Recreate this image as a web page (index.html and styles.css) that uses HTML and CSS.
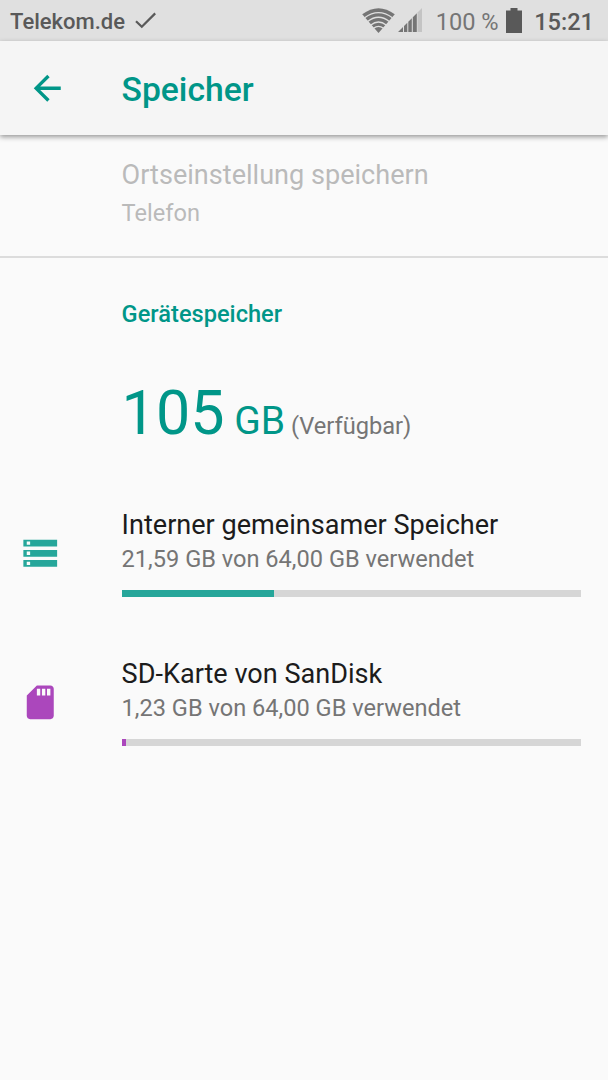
FILE: index.html
```html
<!DOCTYPE html>
<html lang="de">
<head>
    <meta charset="UTF-8">
    <meta name="viewport" content="width=device-width, initial-scale=1.0">
    <title>Speicher</title>
    <link rel="stylesheet" href="styles.css">
</head>
<body>
    <!-- Status bar -->
    <div class="status-bar">
        <span class="carrier">Telekom.de</span>
        <svg class="check-icon" width="22" height="17" viewBox="0 0 22 17">
            <path d="M1 9.2l5.8 5.6L20.2 1.4" fill="none" stroke="#595959" stroke-width="2.2"/>
        </svg>
        <div class="status-right">
            <svg class="wifi-icon" width="33" height="25" viewBox="0 0 33 25">
                <path d="M.2 6.3Q16.5-5.8 32.8 6.3L16.5 25z" fill="#757575"/>
                <g fill="none" stroke="#e0e0e0" stroke-width="1.3">
                    <path d="M2.6 9.8Q16.5-.6 30.4 9.8"/>
                    <path d="M5.7 13.5Q16.5 5 27.3 13.5"/>
                    <path d="M8.8 17Q16.5 11 24.2 17"/>
                    <path d="M11.5 20.2Q16.5 16.4 21.5 20.2"/>
                </g>
            </svg>
            <svg class="signal-icon" width="24" height="24" viewBox="0 0 24 24">
                <path d="M0 24L5 19V24z M6 24V18l3.3-3.3V24z M10.3 24V13.7l3.5-3.5V24z M14.8 24V9.2l4-4V24z" fill="#757575"/>
                <path d="M19.5 24V4.5L24 0V24z" fill="#c4c4c4"/>
            </svg>
            <span class="battery-level">100 %</span>
            <svg class="battery-icon" width="16" height="25" viewBox="0 0 16 25">
                <path d="M0 2.5h4.5V0h7v2.5H16V25H0z" fill="#595959"/>
            </svg>
            <span class="clock">15:21</span>
        </div>
    </div>

    <header class="app-bar">
        <svg class="back-icon" width="40.5" height="40.5" viewBox="0 0 24 24">
            <path d="M20 11H7.83l5.59-5.59L12 4l-8 8 8 8 1.41-1.41L7.83 13H20v-2z" fill="#009688"/>
        </svg>
        <h1>Speicher</h1>
    </header>

    <main>
        <section class="location">
            <p class="item-title">Ortseinstellung speichern</p>
            <p class="item-summary">Telefon</p>
        </section>

        <section class="device">
            <h2>Gerätespeicher</h2>
            <p class="available"><span class="amount">105</span><span class="unit"> GB</span> <span class="note">(Verfügbar)</span></p>

            <div class="volume internal">
                <svg class="volume-icon" width="40.5" height="40.5" viewBox="0 0 24 24">
                    <path d="M2 20h20v-4H2v4zm2-3h2v2H4v-2zM2 4v4h20V4H2zm4 3H4V5h2v2zm-4 7h20v-4H2v4zm2-3h2v2H4v-2z" fill="#26a69a"/>
                </svg>
                <div class="volume-info">
                    <p class="item-title">Interner gemeinsamer Speicher</p>
                    <p class="item-summary">21,59 GB von 64,00 GB verwendet</p>
                    <div class="bar"><div class="bar-fill" style="width: 33.1%"></div></div>
                </div>
            </div>

            <div class="volume sd-card">
                <svg class="volume-icon" width="40.5" height="40.5" viewBox="0 0 24 24">
                    <path d="M18 2h-8L4.02 8 4 20c0 1.1.9 2 2 2h12c1.1 0 2-.9 2-2V4c0-1.1-.9-2-2-2zm-6 6h-2V4h2v4zm3 0h-2V4h2v4zm3 0h-2V4h2v4z" fill="#ab47bc"/>
                </svg>
                <div class="volume-info">
                    <p class="item-title">SD-Karte von SanDisk</p>
                    <p class="item-summary">1,23 GB von 64,00 GB verwendet</p>
                    <div class="bar"><div class="bar-fill" style="width: 1%"></div></div>
                </div>
            </div>
        </section>
    </main>
</body>
</html>
```
FILE: styles.css
```css
:root {
    --primary-color: #009688;
    --internal-color: #26a69a;
    --sd-color: #ab47bc;
    --text-color: #1c1c1c;
    --muted-color: #757575;
    --disabled-color: #bababa;
    --background-color: #fafafa;
}

*, *::before, *::after {
    box-sizing: border-box;
    margin: 0;
    padding: 0;
}

body {
    font-family: Roboto, sans-serif;
    color: var(--text-color);
    background-color: var(--background-color);
    min-height: 100vh;
}

svg {
    display: block;
    flex-shrink: 0;
}

.status-bar {
    display: flex;
    align-items: center;
    height: 40.5px;
    padding: 0 14px 0 10px;
    background: #e0e0e0;
    color: #595959;
    font-size: 22px;
    font-weight: 500;
    line-height: 40px;
    white-space: nowrap;
}

.status-bar span {
    padding-top: 3px;
}

.check-icon {
    margin-left: 10px;
}

.status-right {
    display: flex;
    align-items: center;
    margin-left: auto;
}

.signal-icon {
    margin-left: 3px;
}

.battery-level {
    margin-left: 13.5px;
    color: var(--muted-color);
    font-size: 23.6px;
    font-weight: 400;
}

.battery-icon {
    margin-left: 7.5px;
}

.clock {
    margin-left: 12px;
    font-size: 23.6px;
}

.app-bar {
    display: flex;
    align-items: center;
    height: 94.5px;
    padding-left: 27px;
    background: #f5f5f5;
    box-shadow: 0 2px 5px rgba(0, 0, 0, 0.4);
}

.app-bar h1 {
    margin-left: 54px;
    padding-top: 4px;
    color: var(--primary-color);
    font-size: 33.7px;
    font-weight: 500;
    line-height: 40px;
}

.item-title {
    font-size: 27.08px;
    line-height: 32px;
}

.item-summary {
    color: var(--muted-color);
    font-size: 23.6px;
    line-height: 28px;
}

.location {
    height: 123px;
    padding: 23.5px 27px 0 121.6px;
    border-bottom: 2px solid #dcdcdc;
}

.location p {
    color: var(--disabled-color);
}

.location .item-summary {
    margin-top: 8px;
}

.device {
    padding: 42px 27px 0 20px;
}

.device h2 {
    margin-left: 101.6px;
    color: var(--primary-color);
    font-size: 23.63px;
    font-weight: 500;
    line-height: 28px;
}

.available {
    height: 72px;
    margin: 49px 0 0 101.6px;
    color: var(--primary-color);
    font-size: 23.63px;
    line-height: 72px;
    white-space: nowrap;
}

.amount {
    font-size: 61px;
}

.unit {
    font-size: 39px;
}

.note {
    color: var(--muted-color);
}

.volume {
    display: flex;
    align-items: center;
    height: 88.5px;
    margin-top: 60.7px;
}

.internal {
    margin-top: 59px;
}

.volume-icon {
    margin-top: 1px;
}

.volume-info {
    flex: 1;
    margin-left: 61.1px;
    padding-top: 1px;
}

.volume .item-summary {
    margin-top: 4px;
}

.bar {
    height: 7px;
    margin-top: 16.5px;
    background: #d6d6d6;
}

.bar-fill {
    height: 100%;
}

.internal .bar-fill {
    background: var(--internal-color);
}

.sd-card .bar-fill {
    background: var(--sd-color);
}
```
